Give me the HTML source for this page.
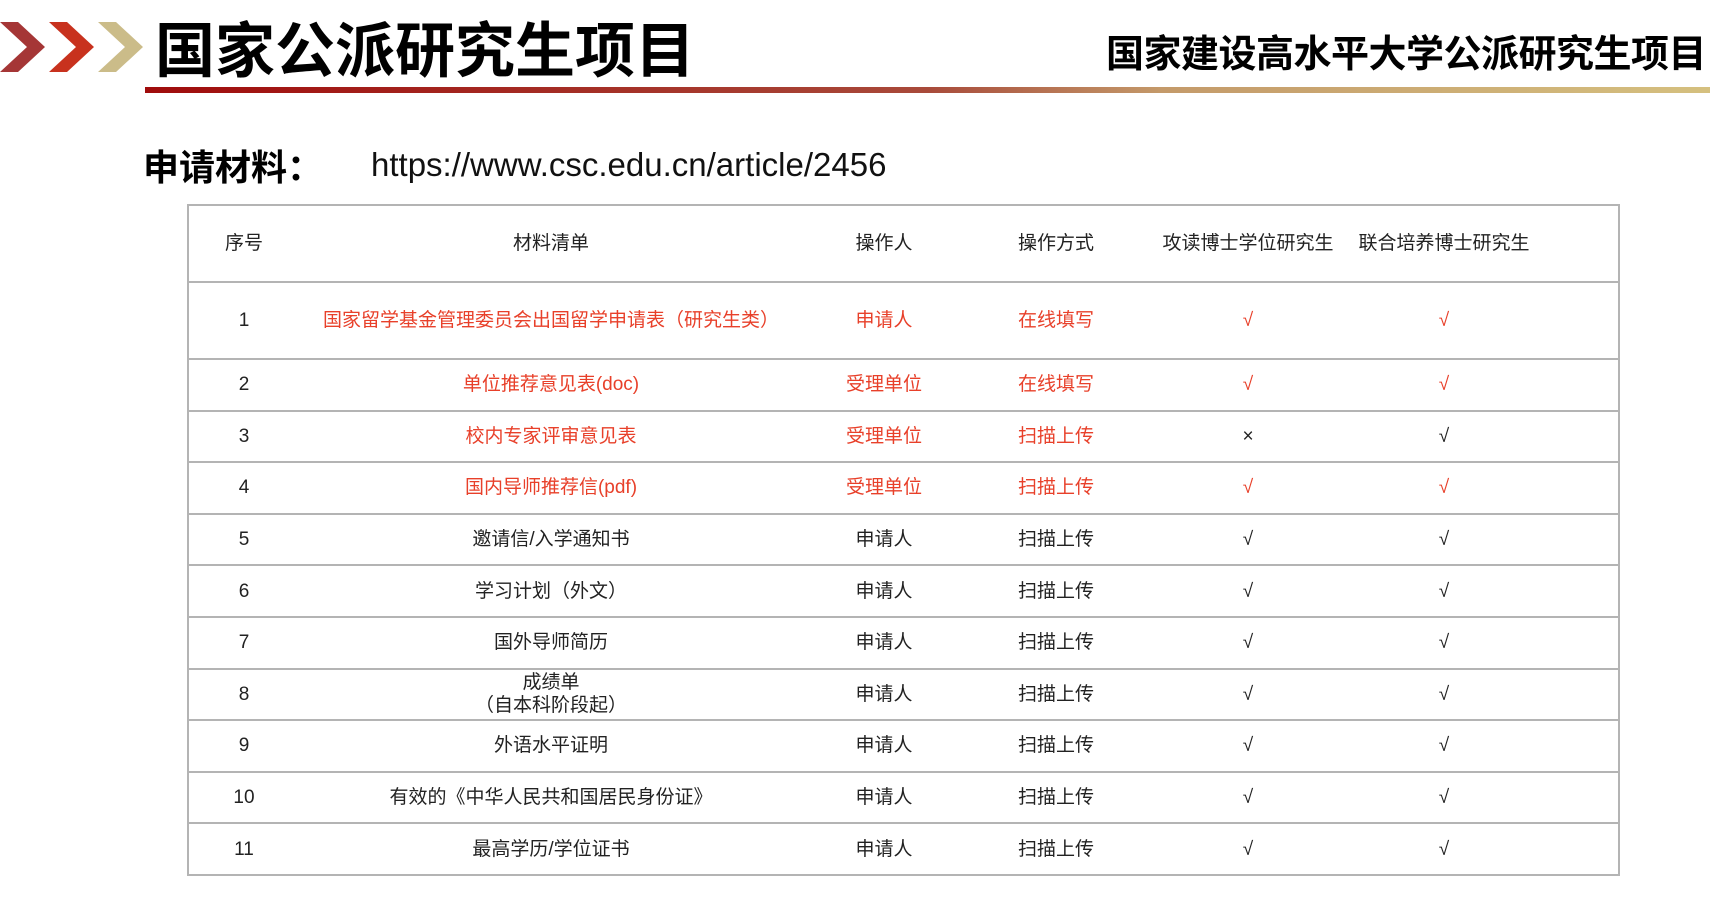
<!DOCTYPE html>
<html><head><meta charset="utf-8"><style>
body{margin:0;width:1714px;height:918px;background:#fff;position:relative;overflow:hidden;font-family:"Liberation Sans","Noto Sans CJK SC",sans-serif;}
.abs{position:absolute;white-space:nowrap;}
table{position:absolute;left:187px;top:204px;width:1433px;border-collapse:collapse;border:2px solid #b4b4b4;font-size:19px;color:#222;table-layout:fixed;}
td{border-bottom:2px solid #b4b4b4;text-align:center;padding:0;line-height:23px;white-space:nowrap;}
tr{height:51.6px;}
.r{color:#e8402a;}
</style></head><body>
<svg class="abs" style="left:0;top:22px" width="145" height="52">
<polygon points="0,0 18,0 45,25 18,50 0,50 27,25" fill="#a53636"/>
<polygon points="49,0 67,0 94,25 67,50 49,50 76,25" fill="#c8321e"/>
<polygon points="98,0 116,0 143,25 116,50 98,50 125,25" fill="#cbbc89"/>
</svg>
<div class="abs" style="left:155px;top:3px;font-size:60px;font-weight:bold;color:#000;font-family:'Noto Sans CJK SC',sans-serif;">国家公派研究生项目</div>
<div class="abs" style="left:145px;top:87px;width:1565px;height:6px;background:linear-gradient(90deg,#a00c0c,#a84a3a 50%,#c49a6a 65%,#d5c07f)"></div>
<div class="abs" style="left:1106px;top:23px;font-size:38px;font-weight:bold;color:#000;font-family:'Noto Sans CJK SC',sans-serif;letter-spacing:-0.5px;">国家建设高水平大学公派研究生项目</div>
<div class="abs" style="left:143px;top:143px;font-size:36px;font-weight:bold;color:#000;font-family:'Noto Sans CJK SC',sans-serif;line-height:44px;">申请材料：</div>
<div class="abs" style="left:371px;top:147px;font-size:33px;color:#111;line-height:36px;">https://www.csc.edu.cn/article/2456</div>
<table>
<colgroup><col style="width:111px"><col style="width:504px"><col style="width:162px"><col style="width:182px"><col style="width:202px"><col style="width:190px"><col></colgroup>
<tr style="height:77px"><td>序号</td><td>材料清单</td><td>操作人</td><td>操作方式</td><td>攻读博士学位研究生</td><td>联合培养博士研究生</td><td></td></tr>
<tr style="height:77px"><td>1</td><td class="r">国家留学基金管理委员会出国留学申请表（研究生类）</td><td class="r">申请人</td><td class="r">在线填写</td><td class="r">√</td><td class="r">√</td><td></td></tr>
<tr><td>2</td><td class="r">单位推荐意见表(doc)</td><td class="r">受理单位</td><td class="r">在线填写</td><td class="r">√</td><td class="r">√</td><td></td></tr>
<tr><td>3</td><td class="r">校内专家评审意见表</td><td class="r">受理单位</td><td class="r">扫描上传</td><td>×</td><td>√</td><td></td></tr>
<tr><td>4</td><td class="r">国内导师推荐信(pdf)</td><td class="r">受理单位</td><td class="r">扫描上传</td><td class="r">√</td><td class="r">√</td><td></td></tr>
<tr><td>5</td><td>邀请信/入学通知书</td><td>申请人</td><td>扫描上传</td><td>√</td><td>√</td><td></td></tr>
<tr><td>6</td><td>学习计划（外文）</td><td>申请人</td><td>扫描上传</td><td>√</td><td>√</td><td></td></tr>
<tr><td>7</td><td>国外导师简历</td><td>申请人</td><td>扫描上传</td><td>√</td><td>√</td><td></td></tr>
<tr><td>8</td><td>成绩单<br>（自本科阶段起）</td><td>申请人</td><td>扫描上传</td><td>√</td><td>√</td><td></td></tr>
<tr><td>9</td><td>外语水平证明</td><td>申请人</td><td>扫描上传</td><td>√</td><td>√</td><td></td></tr>
<tr><td>10</td><td>有效的《中华人民共和国居民身份证》</td><td>申请人</td><td>扫描上传</td><td>√</td><td>√</td><td></td></tr>
<tr><td>11</td><td>最高学历/学位证书</td><td>申请人</td><td>扫描上传</td><td>√</td><td>√</td><td></td></tr>
</table>
</body></html>
